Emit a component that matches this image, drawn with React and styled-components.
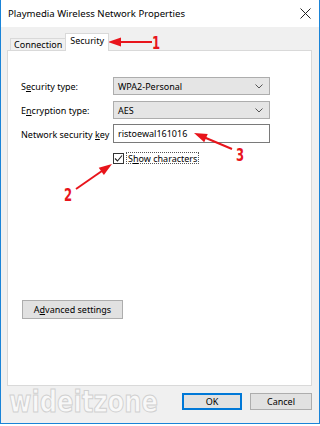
import React from 'react';
import styled, { createGlobalStyle } from 'styled-components';

const Global = createGlobalStyle`
  html, body { margin: 0; padding: 0; background: #fff; }
  body { font-family: "Noto Sans", "Liberation Sans", sans-serif; color: #000; }
`;

const Root = styled.div`
  position: relative;
  width: 320px;
  height: 426px;
  overflow: hidden;
`;

const Window = styled.div`
  width: 320px;
  height: 424px;
  box-sizing: border-box;
  border: 1px solid #1a84d8;
  border-top: none;
  background: #f0f0f0;
  display: flex;
  flex-direction: column;
`;

const TitleBar = styled.div`
  height: 27px;
  flex: none;
  background: #fff;
  display: flex;
  align-items: center;
  justify-content: space-between;
  padding: 0 8px 0 7px;
  font-size: 9.6px;
`;

const Body = styled.div`
  flex: 1;
  display: flex;
  flex-direction: column;
  padding: 6px 7px 0 6px;
  min-height: 0;
`;

const Tabs = styled.div`
  display: flex;
  align-items: flex-end;
  padding-left: 3px;
  height: 18px;
  position: relative;
  z-index: 1;
  margin-bottom: -1px;
`;

const Tab = styled.div`
  box-sizing: border-box;
  height: ${p => (p.$active ? '18px' : '13px')};
  background: ${p => (p.$active ? '#fff' : '#f0f0f0')};
  border: 1px solid #d9d9d9;
  border-bottom: ${p => (p.$active ? 'none' : '1px solid #d9d9d9')};
  margin-left: ${p => (p.$active ? '-1px' : '0')};
  padding: ${p => (p.$active ? '1px 4px 0 4px' : '0 3px')};
  font-size: 9px;
  line-height: 11px;
  display: flex;
  align-items: ${p => (p.$active ? 'flex-start' : 'center')};
`;

const Panel = styled.div`
  flex: 1;
  background: #fff;
  border: 1px solid #d9d9d9;
  display: flex;
  flex-direction: column;
  padding: 26px 0 0 13px;
`;

const Form = styled.div`
  display: grid;
  grid-template-columns: 92px 157px;
  row-gap: 6px;
  align-items: center;
  font-size: 9px;
`;

const Label = styled.div`
  font-size: 9px;
  line-height: 11px;
`;

const Select = styled.div`
  box-sizing: border-box;
  height: 18px;
  border: 1px solid #adadad;
  background: #e5e5e5;
  display: flex;
  align-items: center;
  justify-content: space-between;
  padding: 0 6px 0 4px;
  font-size: 9px;
`;

const Input = styled.div`
  box-sizing: border-box;
  height: 19px;
  margin-top: -1px;
  border: 1px solid #7a7a7a;
  background: #fff;
  display: flex;
  align-items: center;
  padding: 0 4px;
  font-size: 9px;
`;

const CheckRow = styled.div`
  grid-column: 2;
  display: flex;
  align-items: center;
  gap: 2px;
  margin-top: 3px;
`;

const Box = styled.div`
  box-sizing: border-box;
  width: 11px;
  height: 11px;
  border: 1px solid #333;
  background: #fff;
  display: flex;
  align-items: center;
  justify-content: center;
`;

const Focus = styled.div`
  box-sizing: border-box;
  height: 12px;
  border: 1px dotted #555;
  padding: 0 1px;
  display: flex;
  align-items: center;
  font-size: 9px;
`;

const Button = styled.div`
  box-sizing: border-box;
  width: ${p => p.$w}px;
  height: ${p => p.$h || 17}px;
  border: 1px solid ${p => (p.$default ? '#0078d7' : '#adadad')};
  box-shadow: ${p => (p.$default ? 'inset 0 0 0 1px #0078d7' : 'none')};
  background: #e1e1e1;
  display: flex;
  align-items: center;
  justify-content: center;
  font-size: 9px;
`;

const AdvButton = styled(Button)`
  margin: 136px 0 0 1px;
`;

const Footer = styled.div`
  height: 30px;
  flex: none;
  display: flex;
  align-items: flex-start;
  gap: 8px;
  padding: 7px 0 0 2px;
`;

const Watermark = styled.div`
  margin-right: auto;
  margin-top: -10px;
  font-family: "DejaVu Sans Condensed", "DejaVu Sans", sans-serif;
  font-weight: 700;
  font-size: 31px;
  letter-spacing: 0;
  color: #f8f8f8;
  -webkit-text-stroke: 1px #d0d0d0;
  transform: scaleX(0.87);
  transform-origin: left center;
  white-space: nowrap;
  width: 90px;
`;

const Overlay = styled.svg`
  position: absolute;
  left: 0;
  top: 0;
  pointer-events: none;
`;

const U = styled.span`
  text-decoration: underline;
  text-underline-offset: 1px;
`;

function Arrow({ x1, y1, x2, y2 }) {
  const dx = x2 - x1;
  const dy = y2 - y1;
  const len = Math.hypot(dx, dy);
  const ux = dx / len;
  const uy = dy / len;
  const hl = 13;
  const hw = 4.5;
  const bx = x2 - ux * hl;
  const by = y2 - uy * hl;
  const pts = [
    [x2, y2],
    [bx - uy * hw, by + ux * hw],
    [bx + uy * hw, by - ux * hw],
  ]
    .map(p => p.join(','))
    .join(' ');
  return (
    <g>
      <line x1={x1} y1={y1} x2={bx + ux * 2} y2={by + uy * 2} stroke="#e8141b" strokeWidth="2" />
      <polygon points={pts} fill="#e8141b" />
    </g>
  );
}

const Num = ({ x, y, children }) => (
  <text transform={`translate(${x} ${y}) scale(0.72 1)`}>{children}</text>
);

const Chevron = () => (
  <svg width="8" height="5" viewBox="0 0 8 5">
    <path d="M0.5 0.5 L4 4 L7.5 0.5" fill="none" stroke="#555" strokeWidth="1" />
  </svg>
);

export default function App() {
  return (
    <Root>
      <Global />
      <Window>
        <TitleBar>
          <span>Playmedia Wireless Network Properties</span>
          <svg width="11" height="11" viewBox="0 0 11 11">
            <path d="M0.5 0.5 L10.5 10.5 M10.5 0.5 L0.5 10.5" stroke="#222" strokeWidth="1" />
          </svg>
        </TitleBar>
        <Body>
          <Tabs>
            <Tab>Connection</Tab>
            <Tab $active>Security</Tab>
          </Tabs>
          <Panel>
            <Form>
              <Label>S<U>e</U>curity type:</Label>
              <Select>
                <span>WPA2-Personal</span>
                <Chevron />
              </Select>
              <Label>E<U>n</U>cryption type:</Label>
              <Select>
                <span>AES</span>
                <Chevron />
              </Select>
              <Label>Network security <U>k</U>ey</Label>
              <Input>ristoewal161016</Input>
              <CheckRow>
                <Box>
                  <svg width="9" height="9" viewBox="0 0 9 9">
                    <path d="M1 4.5 L3.5 7 L8 1.5" fill="none" stroke="#222" strokeWidth="1.1" />
                  </svg>
                </Box>
                <Focus>S<U>h</U>ow characters</Focus>
              </CheckRow>
            </Form>
            <AdvButton $w={101} $h={19}>A<U>d</U>vanced settings</AdvButton>
          </Panel>
          <Footer>
            <Watermark>wideitzone</Watermark>
            <Button $w={60} $default>OK</Button>
            <Button $w={62}>Cancel</Button>
          </Footer>
        </Body>
      </Window>
      <Overlay width="320" height="426" viewBox="0 0 320 426">
        <Arrow x1={152} y1={42} x2={108} y2={42} />
        <Arrow x1={76} y1={189} x2={112} y2={164} />
        <Arrow x1={232} y1={149} x2={194} y2={133} />
        <g fill="#e8141b" fontFamily='"DejaVu Sans Condensed", "DejaVu Sans", sans-serif' fontWeight="700" fontSize="18">
          <Num x={152} y={49}>1</Num>
          <Num x={64} y={201}>2</Num>
          <Num x={236} y={161}>3</Num>
        </g>
      </Overlay>
    </Root>
  );
}
